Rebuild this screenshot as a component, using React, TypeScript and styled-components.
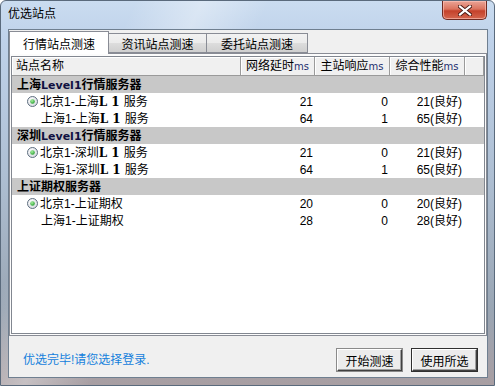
import styled, { createGlobalStyle } from 'styled-components'

const GlobalStyle = createGlobalStyle`
  html, body {
    margin: 0;
    padding: 0;
    background: #ffffff;
  }
  body {
    font-family: "Liberation Sans", "Noto Sans CJK SC", sans-serif;
    font-size: 12px;
    color: #000;
  }
`

const Window = styled.div`
  width: 495px;
  height: 386px;
  box-sizing: border-box;
  display: flex;
  flex-direction: column;
  border: 1px solid #5a6a7c;
  border-radius: 6px 6px 0 0;
  background:
    linear-gradient(115deg, rgba(255,255,255,0) 20%, rgba(255,255,255,0.35) 30%, rgba(255,255,255,0) 40%),
    linear-gradient(180deg, #cadcf0 0%, #bfd2ea 10%, #aebfd3 45%, #9aa6b4 80%, #a89ea2 100%);
  overflow: hidden;
`

const TitleBar = styled.div`
  height: 28px;
  display: flex;
  align-items: flex-start;
  flex: none;
`

const Title = styled.span`
  padding-left: 7px;
  line-height: 27px;
  font-size: 12px;
  color: #000;
`

const CloseButton = styled.div`
  margin-left: auto;
  margin-right: 7px;
  width: 45px;
  height: 19px;
  box-sizing: border-box;
  border: 1px solid #6e2a22;
  border-top: none;
  border-radius: 0 0 5px 5px;
  background: linear-gradient(180deg, #eaa496 0%, #db735e 45%, #c4412b 55%, #d4664e 100%);
  box-shadow: inset 0 0 0 1px rgba(255, 200, 190, 0.6);
  display: flex;
  align-items: center;
  justify-content: center;
`

const FrameBody = styled.div`
  flex: 1;
  display: flex;
  padding: 0 6px 7px 7px;
  min-height: 0;
`

const Client = styled.div`
  flex: 1;
  display: flex;
  flex-direction: column;
  border: 1px solid #6f7f90;
  background: #f0f0f0;
  min-width: 0;
`

const TabStrip = styled.div`
  height: 23px;
  display: flex;
  align-items: flex-end;
  flex: none;
  position: relative;
  z-index: 1;
`

const Tab = styled.div<{ $active?: boolean; $w: number }>`
  width: ${p => p.$w}px;
  height: ${p => (p.$active ? 23 : 20)}px;
  box-sizing: border-box;
  border: 1px solid #898c95;
  border-bottom: ${p => (p.$active ? 'none' : '1px solid #898c95')};
  border-left: ${p => (p.$active ? '1px solid #898c95' : 'none')};
  background: ${p => (p.$active ? '#ffffff' : 'linear-gradient(180deg, #f2f2f2 0%, #ebebeb 50%, #dddddd 51%, #cfcfcf 100%)')};
  margin-bottom: ${p => (p.$active ? -1 : 0)}px;
  display: flex;
  align-items: center;
  justify-content: center;
  padding-top: ${p => (p.$active ? 0 : 1)}px;
  font-size: 12px;
  white-space: nowrap;
`

const Panel = styled.div`
  height: 283px;
  box-sizing: border-box;
  flex: none;
  border: 1px solid #898c95;
  background: #fcfcfc;
  padding: 2px 1px 1px 1px;
  display: flex;
`

const List = styled.div`
  flex: 1;
  border: 1px solid #828790;
  background: #ffffff;
  overflow: hidden;
`

const Grid = styled.div`
  display: grid;
  grid-template-columns: 229px 74px 75px 75px 1fr;
  grid-template-rows: 19px;
  grid-auto-rows: 17px;
`

const HeaderCell = styled.div<{ $center?: boolean }>`
  height: 19px;
  box-sizing: border-box;
  border-right: 1px solid #9a9a9a;
  border-bottom: 1px solid #9a9a9a;
  box-shadow: inset 1px 1px 0 #ffffff;
  background: #f0f0f0;
  padding-left: ${p => (p.$center ? 0 : 4)}px;
  text-align: ${p => (p.$center ? 'center' : 'left')};
  line-height: 18px;
  white-space: nowrap;
  overflow: hidden;
`

const Ms = styled.span`
  font-family: "DejaVu Sans", sans-serif;
  font-size: 10px;
  color: #1c2f6e;
`

const GroupRow = styled.div`
  grid-column: 1 / -1;
  height: 17px;
  line-height: 18px;
  background: #c8c8c8;
  padding-left: 5px;
  font-weight: bold;
  white-space: nowrap;
`

const Level = styled.span`
  font-family: "DejaVu Sans", sans-serif;
  font-size: 11px;
  font-weight: bold;
  color: #101040;
`

const NameCell = styled.div<{ $radio?: boolean }>`
  height: 17px;
  line-height: 18px;
  display: flex;
  align-items: center;
  gap: 2px;
  padding-left: ${p => (p.$radio ? 15 : 29)}px;
  white-space: nowrap;
`

const Bold = styled.span`
  font-family: "DejaVu Serif", serif;
  font-weight: bold;
  font-size: 12px;
  margin-right: 4px;
`

const NumCell = styled.div<{ $pad?: number }>`
  height: 17px;
  line-height: 18px;
  text-align: right;
  padding-right: ${p => p.$pad ?? 2}px;
  white-space: nowrap;
`

const Footer = styled.div`
  flex: 1;
  display: flex;
  align-items: center;
  gap: 10px;
  padding: 7px 10px 0 14px;
`

const Status = styled.span`
  color: #1480dc;
  margin-right: auto;
  margin-bottom: 4px;
`

const Button = styled.button<{ $default?: boolean }>`
  width: 65px;
  height: 22px;
  box-sizing: border-box;
  font-family: "Liberation Sans", "Noto Sans CJK SC", sans-serif;
  font-size: 12px;
  color: #000;
  padding: 0;
  background: #ececec;
  border: 1px solid;
  border-color: #ffffff #404040 #404040 #ffffff;
  box-shadow: ${p =>
    p.$default
      ? '0 0 0 1px #303030, inset -1px -1px 0 #a0a0a0'
      : 'inset -1px -1px 0 #a0a0a0, 0 0 0 1px #8a8a8a'};
`

const Radio = () => (
  <svg width="11" height="11" viewBox="0 0 11 11">
    <defs>
      <radialGradient id="rg" cx="0.4" cy="0.35" r="0.7">
        <stop offset="0" stopColor="#ffffff" />
        <stop offset="1" stopColor="#d4d8de" />
      </radialGradient>
      <radialGradient id="dot" cx="0.4" cy="0.35" r="0.7">
        <stop offset="0" stopColor="#a8f0a0" />
        <stop offset="1" stopColor="#1f9a2a" />
      </radialGradient>
    </defs>
    <circle cx="5.5" cy="5.5" r="5" fill="url(#rg)" stroke="#5f6f80" strokeWidth="1" />
    <circle cx="5.5" cy="5.5" r="2.3" fill="url(#dot)" />
  </svg>
)

type Row = { radio: boolean; from: string; to: string; lvl?: boolean; d: number; r: number }
type Group = { title: string; level?: boolean; rows: Row[] }

const groups: Group[] = [
  {
    title: '上海',
    level: true,
    rows: [
      { radio: true, from: '北京', to: '上海', lvl: true, d: 21, r: 0 },
      { radio: false, from: '上海', to: '上海', lvl: true, d: 64, r: 1 },
    ],
  },
  {
    title: '深圳',
    level: true,
    rows: [
      { radio: true, from: '北京', to: '深圳', lvl: true, d: 21, r: 0 },
      { radio: false, from: '上海', to: '深圳', lvl: true, d: 64, r: 1 },
    ],
  },
  {
    title: '上证期权服务器',
    rows: [
      { radio: true, from: '北京', to: '上证期权', d: 20, r: 0 },
      { radio: false, from: '上海', to: '上证期权', d: 28, r: 0 },
    ],
  },
]

const App = () => {
  return (
    <>
      <GlobalStyle />
      <Window>
        <TitleBar>
          <Title>优选站点</Title>
          <CloseButton>
            <svg width="14" height="11" viewBox="0 0 14 11">
              <path d="M2 1.5 L12 9.5 M12 1.5 L2 9.5" stroke="#4a1a14" strokeWidth="4" strokeLinecap="square" />
              <path d="M2 1.5 L12 9.5 M12 1.5 L2 9.5" stroke="#ffffff" strokeWidth="2.2" strokeLinecap="square" />
            </svg>
          </CloseButton>
        </TitleBar>
        <FrameBody>
          <Client>
            <TabStrip>
              <Tab $active $w={100}>行情站点测速</Tab>
              <Tab $w={98}>资讯站点测速</Tab>
              <Tab $w={101}>委托站点测速</Tab>
            </TabStrip>
            <Panel>
              <List>
                <Grid>
                  <HeaderCell>站点名称</HeaderCell>
                  <HeaderCell $center>网络延时<Ms>ms</Ms></HeaderCell>
                  <HeaderCell $center>主站响应<Ms>ms</Ms></HeaderCell>
                  <HeaderCell $center>综合性能<Ms>ms</Ms></HeaderCell>
                  <HeaderCell />
                  {groups.map(g => (
                    <>
                      <GroupRow key={g.title}>
                        {g.level ? (
                          <>
                            {g.title}
                            <Level>Level1</Level>行情服务器
                          </>
                        ) : (
                          g.title
                        )}
                      </GroupRow>
                      {g.rows.map(r => (
                        <>
                          <NameCell $radio={r.radio}>
                            {r.radio && <Radio />}
                            <span>
                              {r.from}1-{r.to}
                              {r.lvl && (
                                <>
                                  <Bold>L 1</Bold>服务
                                </>
                              )}
                            </span>
                          </NameCell>
                          <NumCell>{r.d}</NumCell>
                          <NumCell>{r.r}</NumCell>
                          <NumCell $pad={3}>{r.d + r.r}(良好)</NumCell>
                          <NumCell />
                        </>
                      ))}
                    </>
                  ))}
                </Grid>
              </List>
            </Panel>
            <Footer>
              <Status>优选完毕!请您选择登录.</Status>
              <Button>开始测速</Button>
              <Button $default>使用所选</Button>
            </Footer>
          </Client>
        </FrameBody>
      </Window>
    </>
  )
}

export default App
